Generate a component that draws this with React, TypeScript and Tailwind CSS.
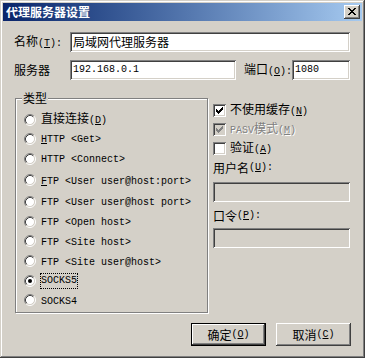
import React from "react";

const mono = "font-['Liberation_Mono',monospace] text-[10px]";
const sunken =
  "shadow-[inset_1px_1px_#808080,inset_-1px_-1px_#ffffff,inset_2px_2px_#404040,inset_-2px_-2px_#d4d0c8]";
const raised =
  "shadow-[inset_-1px_-1px_#404040,inset_1px_1px_#ffffff,inset_-2px_-2px_#808080]";

function Key({ k, colon = false }: { k: string; colon?: boolean }) {
  return (
    <span className={mono}>
      (<span className="underline underline-offset-1">{k}</span>){colon ? ":" : ""}
    </span>
  );
}

function Field({
  value,
  w,
  disabled = false,
  latin = false,
}: {
  value?: string;
  w: string;
  disabled?: boolean;
  latin?: boolean;
}) {
  return (
    <div
      className={`h-[20px] shrink-0 flex items-center px-[3px] ${w} ${sunken} ${
        disabled ? "bg-[#d4d0c8]" : "bg-white"
      }`}
    >
      <span className={latin ? mono : ""}>{value}</span>
    </div>
  );
}

function Radio({ checked = false }: { checked?: boolean }) {
  return (
    <svg width="12" height="12" viewBox="0 0 12 12" className="shrink-0">
      <circle cx="6" cy="6" r="4.5" fill="#fff" />
      <path d="M2.11 9.89 A5.5 5.5 0 0 1 9.89 2.11" fill="none" stroke="#808080" />
      <path d="M9.89 2.11 A5.5 5.5 0 0 1 2.11 9.89" fill="none" stroke="#ffffff" />
      <path d="M2.82 9.18 A4.5 4.5 0 0 1 9.18 2.82" fill="none" stroke="#404040" />
      <path d="M9.18 2.82 A4.5 4.5 0 0 1 2.82 9.18" fill="none" stroke="#d4d0c8" />
      {checked && <circle cx="6" cy="6" r="2" fill="#000" />}
    </svg>
  );
}

function Check({ checked = false, disabled = false }: { checked?: boolean; disabled?: boolean }) {
  const c = disabled ? "#808080" : "#000";
  return (
    <div className={`w-[13px] h-[13px] shrink-0 ${sunken} ${disabled ? "bg-[#d4d0c8]" : "bg-white"}`}>
      {checked && (
        <svg width="13" height="13" viewBox="0 0 13 13" shapeRendering="crispEdges">
          <rect x="9" y="3" width="1" height="1" fill={c} />
          <rect x="8" y="4" width="2" height="1" fill={c} />
          <rect x="3" y="5" width="1" height="1" fill={c} />
          <rect x="7" y="5" width="3" height="1" fill={c} />
          <rect x="3" y="6" width="2" height="1" fill={c} />
          <rect x="6" y="6" width="3" height="1" fill={c} />
          <rect x="3" y="7" width="5" height="1" fill={c} />
          <rect x="4" y="8" width="3" height="1" fill={c} />
          <rect x="5" y="9" width="1" height="1" fill={c} />
        </svg>
      )}
    </div>
  );
}

const radios: { h: string; label: React.ReactNode; checked?: boolean }[] = [
  { h: "h-[19px]", label: <>直接连接<Key k="D" /></> },
  { h: "h-[19px]", label: <span className={`${mono} whitespace-pre`}><span className="underline underline-offset-1">H</span>TTP {"<Get>"}</span> },
  { h: "h-[21px]", label: <span className={`${mono} whitespace-pre`}>HTTP {"<Connect>"}</span> },
  { h: "h-[22px]", label: <span className={`${mono} whitespace-pre`}><span className="underline underline-offset-1">F</span>TP {"<User user@host:port>"}</span> },
  { h: "h-[21px]", label: <span className={`${mono} whitespace-pre`}>FTP {"<User user@host port>"}</span> },
  { h: "h-[19px]", label: <span className={`${mono} whitespace-pre`}>FTP {"<Open host>"}</span> },
  { h: "h-[20px]", label: <span className={`${mono} whitespace-pre`}>FTP {"<Site host>"}</span> },
  { h: "h-[20px]", label: <span className={`${mono} whitespace-pre`}>FTP {"<Site user@host>"}</span> },
  { h: "h-[19px]", label: <span className={mono}>SOCKS5</span>, checked: true },
  { h: "h-[20px]", label: <span className={mono}>SOCKS4</span> },
];

export default function App() {
  return (
    <div
      className={`w-[365px] h-[358px] bg-[#d4d0c8] p-[3px] text-black text-[12px] leading-[14px] font-['Noto_Sans_CJK_SC',sans-serif] shadow-[inset_-1px_-1px_#404040,inset_1px_1px_#d4d0c8,inset_-2px_-2px_#808080,inset_2px_2px_#ffffff]`}
    >
      {/* Title bar */}
      <div className="h-[18px] flex items-center justify-between pl-[3px] pr-[2px] bg-linear-to-r from-[#0a246a] to-[#a6caf0]">
        <span className="text-white font-bold">代理服务器设置</span>
        <div className={`w-[16px] h-[14px] bg-[#d4d0c8] ${raised}`}>
          <svg width="16" height="14" viewBox="0 0 16 14" shapeRendering="crispEdges">
            <path d="M4 3h2v1H4zM10 3h2v1h-2zM5 4h2v1H5zM9 4h2v1H9zM6 5h4v1H6zM7 6h2v1H7zM6 7h4v1H6zM5 8h2v1H5zM9 8h2v1H9zM4 9h2v1H4zM10 9h2v1h-2z" fill="#000" />
          </svg>
        </div>
      </div>

      <div className="pl-[11px] pr-[12px]">
        {/* Name */}
        <div className="mt-[11px] flex items-center h-[20px]">
          <span className="w-[56px] shrink-0 whitespace-nowrap">名称<Key k="T" colon /></span>
          <Field value="局域网代理服务器" w="w-[280px]" />
        </div>

        {/* Server / port */}
        <div className="mt-[8px] flex items-center h-[20px]">
          <span className="w-[56px] shrink-0 whitespace-nowrap">服务器</span>
          <Field value="192.168.0.1" w="w-[166px]" latin />
          <span className="ml-[8px] w-[48px] shrink-0 whitespace-nowrap">端口<Key k="O" colon /></span>
          <Field value="1080" w="w-[58px]" latin />
        </div>

        {/* Type group + options */}
        <div className="mt-[18px] flex items-start">
          <div className="relative ml-[1px] w-[193px] h-[215px] shrink-0 border border-[#808080] shadow-[inset_1px_1px_#ffffff,1px_1px_#ffffff] pt-[11px] pl-[8px]">
            <span className="absolute -top-[8px] left-[6px] px-[1px] bg-[#d4d0c8]">类型</span>
            {radios.map((r, i) => (
              <div key={i} className={`flex items-center ${r.h}`}>
                <Radio checked={r.checked} />
                {r.checked ? (
                  <span className="ml-[4px] border border-dotted border-black h-[16px] flex items-center">
                    {r.label}
                  </span>
                ) : (
                  <span className="ml-[5px] whitespace-nowrap">{r.label}</span>
                )}
              </div>
            ))}
          </div>

          <div className="ml-[5px] w-[137px] shrink-0">
            <div className="mt-[3px] h-[19px] flex items-center">
              <Check checked />
              <span className="ml-[4px]">不使用缓存<Key k="N" /></span>
            </div>
            <div className="h-[19px] flex items-center">
              <Check checked disabled />
              <span className="ml-[4px] text-[#808080] [text-shadow:1px_1px_#ffffff]">
                <span className={mono}>PASV</span>模式<Key k="M" />
              </span>
            </div>
            <div className="h-[19px] flex items-center">
              <Check />
              <span className="ml-[4px]">验证<Key k="A" /></span>
            </div>
            <div className="mt-[2px] h-[16px] flex items-center">
              用户名<Key k="U" colon />
            </div>
            <div className="mt-[6px]">
              <Field w="w-[137px]" disabled />
            </div>
            <div className="mt-[6px] h-[16px] flex items-center">
              口令<Key k="P" colon />
            </div>
            <div className="mt-[4px]">
              <Field w="w-[137px]" disabled />
            </div>
          </div>
        </div>

        {/* Buttons */}
        <div className="mt-[10px] -mr-[1px] flex justify-end gap-[10px]">
          <div className="w-[75px] h-[23px] border border-black">
            <div className={`w-full h-full flex items-center justify-center ${raised}`}>
              确定<Key k="O" />
            </div>
          </div>
          <div className={`w-[75px] h-[23px] flex items-center justify-center ${raised}`}>
            取消<Key k="C" />
          </div>
        </div>
      </div>
    </div>
  );
}
